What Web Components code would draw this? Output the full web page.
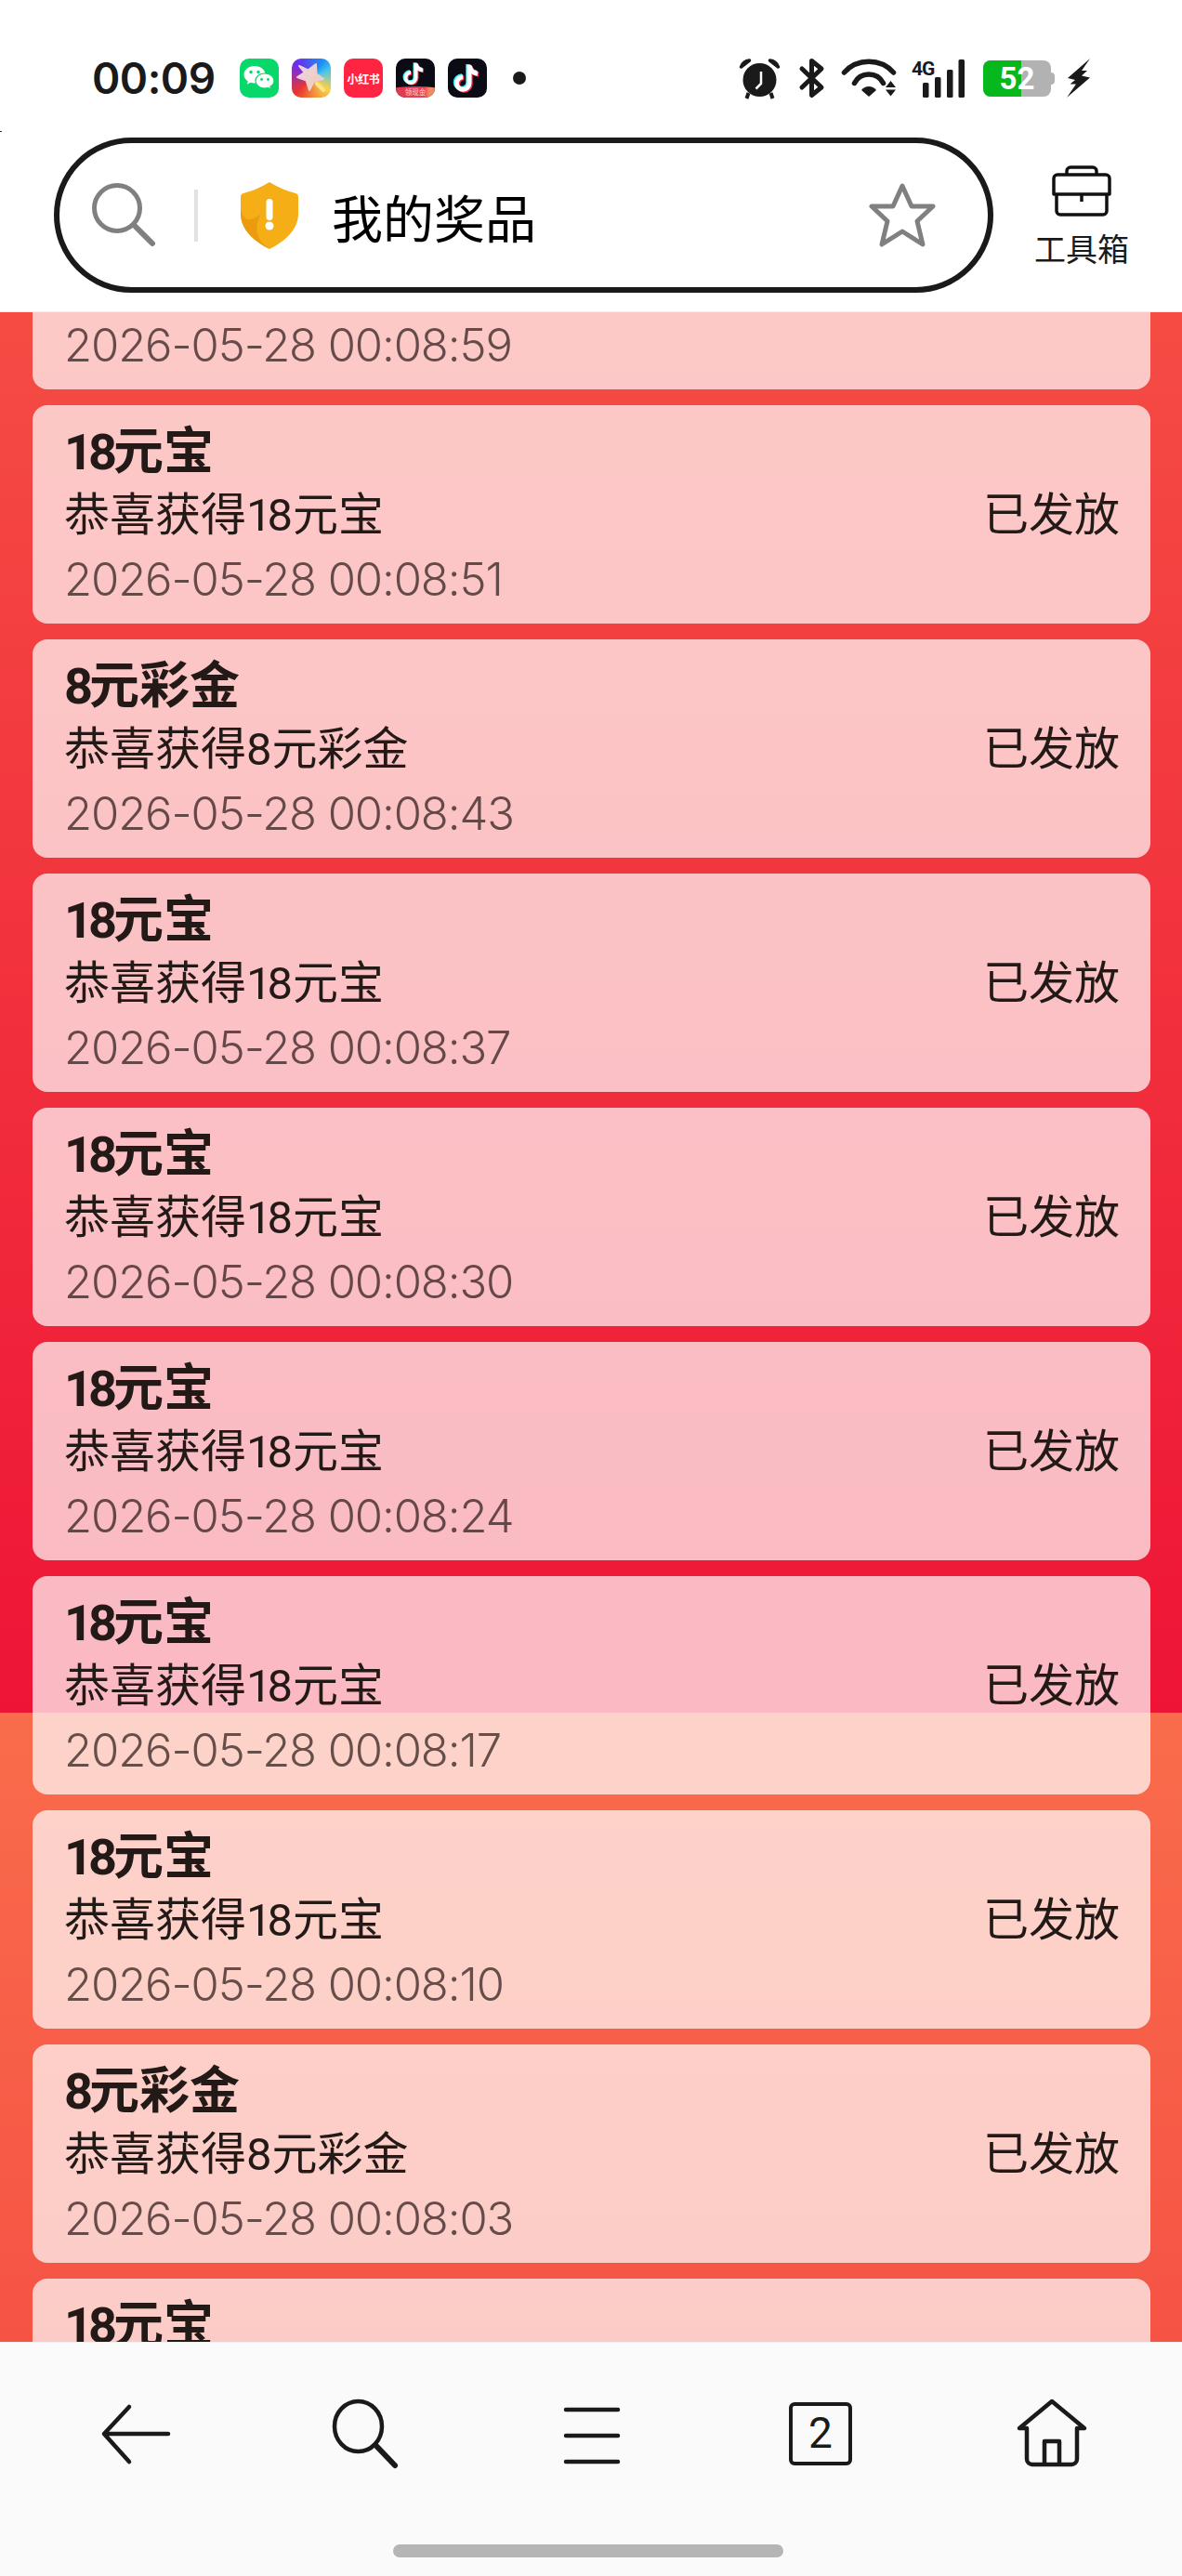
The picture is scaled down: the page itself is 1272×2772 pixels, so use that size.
<!DOCTYPE html>
<html lang="zh">
<head>
<meta charset="utf-8">
<title>我的奖品</title>
<style>
  html, body { margin: 0; padding: 0; }
  body { width: 1272px; height: 2772px; overflow: hidden; font-family: Roboto, "Noto Sans CJK SC", sans-serif; }
  .n { letter-spacing: -5px; margin-right: 1px; }
  .m { letter-spacing: -5px; margin-right: 5px; }
  prize-phone { height: 2772px; }
</style>
</head>
<body>
<prize-phone>
  <top-header slot="top" title-text="我的奖品"></top-header>

  <prize-card first><span slot="time">2026-05-28 00:08:59</span></prize-card>
  <prize-card><span slot="title"><span class="n">18</span>元宝</span><span slot="desc">恭喜获得<span class="m">18</span>元宝</span><span slot="state">已发放</span><span slot="time">2026-05-28 00:08:51</span></prize-card>
  <prize-card><span slot="title"><span class="n">8</span>元彩金</span><span slot="desc">恭喜获得8元彩金</span><span slot="state">已发放</span><span slot="time">2026-05-28 00:08:43</span></prize-card>
  <prize-card><span slot="title"><span class="n">18</span>元宝</span><span slot="desc">恭喜获得<span class="m">18</span>元宝</span><span slot="state">已发放</span><span slot="time">2026-05-28 00:08:37</span></prize-card>
  <prize-card><span slot="title"><span class="n">18</span>元宝</span><span slot="desc">恭喜获得<span class="m">18</span>元宝</span><span slot="state">已发放</span><span slot="time">2026-05-28 00:08:30</span></prize-card>
  <prize-card><span slot="title"><span class="n">18</span>元宝</span><span slot="desc">恭喜获得<span class="m">18</span>元宝</span><span slot="state">已发放</span><span slot="time">2026-05-28 00:08:24</span></prize-card>
  <prize-card><span slot="title"><span class="n">18</span>元宝</span><span slot="desc">恭喜获得<span class="m">18</span>元宝</span><span slot="state">已发放</span><span slot="time">2026-05-28 00:08:17</span></prize-card>
  <prize-card><span slot="title"><span class="n">18</span>元宝</span><span slot="desc">恭喜获得<span class="m">18</span>元宝</span><span slot="state">已发放</span><span slot="time">2026-05-28 00:08:10</span></prize-card>
  <prize-card><span slot="title"><span class="n">8</span>元彩金</span><span slot="desc">恭喜获得8元彩金</span><span slot="state">已发放</span><span slot="time">2026-05-28 00:08:03</span></prize-card>
  <prize-card><span slot="title"><span class="n">18</span>元宝</span></prize-card>

  <bottom-nav slot="bottom"></bottom-nav>
</prize-phone>

<script>
const phoneTemplate = document.createElement("template");
phoneTemplate.innerHTML = `
  <style>
    :host { display: flex; flex-direction: column; width: 1272px; overflow: hidden; }
    .list {
      flex: 1;
      min-height: 0;
      overflow: hidden;
      display: flex;
      flex-direction: column;
      gap: 17px;
      padding: 0 34px 0 35px;
      background: linear-gradient(180deg, #f96c4b 0%, #ee1436 100%) 0 -869px / 100% 2376px repeat-y;
    }
    ::slotted(prize-card[first]) { margin-top: -152px; }
  </style>
  <slot name="top"></slot>
  <div class="list"><slot></slot></div>
  <slot name="bottom"></slot>
`;

class PrizePhone extends HTMLElement {
  constructor(){
    super();
    this.attachShadow({mode:"open"});
    this.shadowRoot.appendChild(phoneTemplate.content.cloneNode(true));
  }
}

const headerTemplate = document.createElement("template");
headerTemplate.innerHTML = `
  <style>
    :host { display: block; flex: none; height: 336px; box-sizing: border-box; background: #fff; border-bottom: 1px solid #eee; position: relative; z-index: 1; font-family: Roboto, "Noto Sans CJK SC", sans-serif; color: #1a1a1a; }
    .speck { position: absolute; left: 0; top: 141px; width: 2px; height: 1px; background: #333; }
    .status { display: flex; align-items: center; justify-content: space-between; height: 44px; padding: 62px 99px 0; }
    .left, .right { display: flex; align-items: center; }
    .clock { font: 600 46px Inter, Roboto, sans-serif; width: 131px; margin-right: 28px; letter-spacing: -0.5px; white-space: nowrap; }
    .app { width: 42px; height: 42px; margin-right: 14px; border-radius: 10px; overflow: hidden; position: relative; display: block; flex: none; }
    .app svg { display: block; }
    .wechat { background: #07d869; }
    .star { background: conic-gradient(from 315deg, #6a2cf0 0deg, #1c8ff5 80deg, #49c6e8 110deg, #f7d24a 170deg, #f3873a 220deg, #e8352f 270deg, #6a2cf0 360deg); }
    .xhs { background: #ff2442; color: #fff; font: 700 12px "Noto Sans CJK SC", sans-serif; display: flex; align-items: center; justify-content: center; white-space: nowrap; letter-spacing: -0.3px; }
    .tt { background: #0b0b16; }
    .strip { position: absolute; left: -2px; right: -2px; bottom: -2px; height: 14px; padding-bottom: 2px; box-sizing: border-box; border-radius: 60% 60% 0 0 / 3px 3px 0 0; background: linear-gradient(90deg, #de3850 0%, #e8405a 70%, #f08a60 82%); color: #ffd9c9; font: 400 7.5px/12px "Noto Sans CJK SC", sans-serif; text-align: center; }
    .dot { width: 14px; height: 14px; border-radius: 50%; background: #1a1a1a; margin-left: 14px; }
    .battery { position: relative; width: 77px; height: 39px; margin: 0 13px 0 20px; }
    .cell { position: absolute; left: 0; top: 0; width: 73px; height: 39px; border-radius: 8px; overflow: hidden; display: flex; background: #b2b2b2; }
    .cell i { display: block; width: 41px; background: #07b81c; }
    .nub { position: absolute; right: 0; top: 13px; width: 4px; height: 13px; border-radius: 0 4px 4px 0; background: #b2b2b2; }
    .level { position: absolute; left: 0; top: 0; width: 73px; text-align: center; font: 700 33px/39px Roboto, sans-serif; color: #fff; }
    .bar { display: flex; padding-left: 58px; margin-top: 42px; }
    .pill { display: flex; align-items: center; box-sizing: border-box; width: 1011px; height: 167px; border: 6px solid #1a1a1a; border-radius: 84px; background: #fff; padding: 0 56px 0 35px; }
    .sep { width: 4px; height: 56px; background: #e2e2e2; margin: 0 46px 0 40px; flex: none; }
    .title { flex: 1; margin-left: 36px; font: 400 55px "Noto Sans CJK SC", sans-serif; color: #000; white-space: nowrap; }
    .tool { width: 100px; margin-left: 45px; padding-top: 30px; display: flex; flex-direction: column; align-items: center; }
    .tool span { font: 400 34px/40px "Noto Sans CJK SC", sans-serif; margin-top: 14px; white-space: nowrap; }
    svg { display: block; flex: none; overflow: visible; }
  </style>
  <div class="speck"></div>
  <div class="status">
    <div class="left">
      <span class="clock">00:09</span>
      <span class="app wechat">
        <svg width="42" height="42" viewBox="0 0 42 42">
          <path d="M16 8c-6.400 0-11.500 4-11.500 9.200 0 3 1.700 5.500 4.300 7.200l-1 3.400 3.900-2c1.300.4 2.800.6 4.300.6 6.400 0 11.500-4 11.500-9.200S22.400 8 16 8z" fill="#fff"/>
          <path d="M27 16c-5.600 0-10 3.500-10 8s4.400 8 10 8c1.200 0 2.400-.2 3.500-.5l3.200 1.700-.8-2.900c2.500-1.500 4.100-3.800 4.100-6.300 0-4.500-4.400-8-10-8z" fill="#fff" stroke="#07d869" stroke-width="1.200"/>
          <circle cx="12" cy="14.500" r="1.700" fill="#07d869"/><circle cx="20" cy="14.500" r="1.700" fill="#07d869"/>
          <circle cx="23.500" cy="22.500" r="1.400" fill="#07d869"/><circle cx="30.500" cy="22.500" r="1.400" fill="#07d869"/>
        </svg>
      </span>
      <span class="app star">
        <svg width="42" height="42" viewBox="0 0 42 42">
          <defs><linearGradient id="st" x1="0" y1="0" x2="1" y2="1"><stop offset="0" stop-color="#e6d6f4"/><stop offset="1" stop-color="#f6c9a0"/></linearGradient></defs>
          <path d="M8 8l9.500 4.500L26 6l.5 10.500L34 22l-10 2-5 10-3.500-10.500L6 20l7.500-5z" fill="url(#st)" stroke="#eccfd6" stroke-width="2" stroke-linejoin="round"/>
          <path d="M27 27l7 7" stroke="#fbe58c" stroke-width="4" stroke-linecap="round"/>
        </svg>
      </span>
      <span class="app xhs">小红书</span>
      <span class="app tt">
        <svg width="42" height="34" viewBox="0 0 42 34">
          <g fill="none" stroke-width="4">
            <path d="M21.500 5v15.500a5.500 5.500 0 1 1-5.500-5.500M21.500 5.500c.8 4 3.600 6.500 7.500 7" stroke="#25f4ee" transform="translate(-1 -.8)"/>
            <path d="M21.500 5v15.500a5.500 5.500 0 1 1-5.500-5.500M21.500 5.500c.8 4 3.600 6.500 7.500 7" stroke="#fe2c55" transform="translate(1 .8)"/>
            <path d="M21.500 5v15.500a5.500 5.500 0 1 1-5.500-5.500M21.500 5.500c.8 4 3.600 6.500 7.500 7" stroke="#fff"/>
          </g>
        </svg>
        <span class="strip">领现金</span>
      </span>
      <span class="app tt">
        <svg width="42" height="42" viewBox="0 0 42 42">
          <g fill="none" stroke-width="5">
            <path d="M23 7v19.500a6.800 6.800 0 1 1-6.800-6.800M23 7.500c1 5 4.500 8 9 8.800" stroke="#25f4ee" transform="translate(-1.200 -1)"/>
            <path d="M23 7v19.500a6.800 6.800 0 1 1-6.800-6.800M23 7.500c1 5 4.500 8 9 8.800" stroke="#fe2c55" transform="translate(1.200 1)"/>
            <path d="M23 7v19.500a6.800 6.800 0 1 1-6.800-6.800M23 7.500c1 5 4.500 8 9 8.800" stroke="#fff"/>
          </g>
        </svg>
      </span>
      <span class="dot"></span>
    </div>
    <div class="right">
      <svg width="43" height="43" viewBox="0 0 43 43">
        <circle cx="21.500" cy="23" r="18" fill="#1a1a1a"/>
        <path d="M1.500 9C3 5 6 2.500 10.500 2zM41.500 9C40 5 37 2.500 32.500 2z" fill="#1a1a1a" stroke="#1a1a1a" stroke-width="3.500" stroke-linejoin="round"/>
        <path d="M9.500 37l-2 6M33.500 37l2 6" stroke="#1a1a1a" stroke-width="4"/>
        <path d="M23 14v13l-5.500 5.500" fill="none" stroke="#fff" stroke-width="2.500"/>
      </svg>
      <svg style="margin-left:21px" width="27" height="42" viewBox="0 0 27 42">
        <path d="M3 11l21 20-10.500 8.500v-37L24 11 3 31" fill="none" stroke="#1a1a1a" stroke-width="5" stroke-linejoin="round" stroke-linecap="round"/>
      </svg>
      <svg style="margin-left:19px" width="59" height="40" viewBox="0 0 59 40">
        <path d="M2.500 14A36 36 0 0 1 55.500 14M13.500 25.500A17.500 17.500 0 0 1 44.500 25.500" fill="none" stroke="#1a1a1a" stroke-width="5.500" stroke-linecap="round"/>
        <path d="M29 29c3 0 6 1.500 8 4l-8 7-8-7c2-2.500 5-4 8-4z" fill="#1a1a1a"/>
        <path d="M52.500 23l5.500 7H47zM52.500 39.500l5.500-7H47z" fill="#1a1a1a"/>
      </svg>
      <svg style="margin-left:17px" width="56" height="41" viewBox="0 0 56 41">
        <text x="-1" y="17" font-family="Roboto, sans-serif" font-weight="700" font-size="21" letter-spacing="-1" fill="#1a1a1a">4G</text>
        <rect x="11" y="25" width="6.500" height="16" rx="1.500" fill="#1a1a1a"/>
        <rect x="24" y="19" width="6.500" height="22" rx="1.500" fill="#1a1a1a"/>
        <rect x="37" y="11" width="6.500" height="30" rx="1.500" fill="#1a1a1a"/>
        <rect x="49.500" y="0" width="6.500" height="41" rx="1.500" fill="#1a1a1a"/>
      </svg>
      <div class="battery">
        <div class="cell"><i></i></div>
        <div class="nub"></div>
        <div class="level">52</div>
      </div>
      <svg width="25" height="42" viewBox="0 0 25 42">
        <path d="M25 0L1 21l8 2-5.500 4.500H10L0 42l25-21.500-9-2 6-5.500h-6z" fill="#1a1a1a"/>
      </svg>
    </div>
  </div>
  <div class="bar">
    <div class="pill">
      <svg width="70" height="70" viewBox="0 0 70 70">
        <circle cx="27" cy="27" r="24.500" fill="none" stroke="#808080" stroke-width="5"/>
        <path d="M45 45l20 20" stroke="#808080" stroke-width="6" stroke-linecap="round"/>
      </svg>
      <div class="sep"></div>
      <svg width="62" height="72" viewBox="0 0 62 72">
        <path d="M31 0c8 5 20 10 28 12 2 .6 3 2 3 4v18c0 16-13 29-31 38C13 63 0 50 0 34V16c0-2 1-3.400 3-4 8-2 20-7 28-12z" fill="#f5ae16"/>
        <path d="M31 72C13 63 0 50 0 34v-6c3 16 12 14 22 6-8 14-6 28 9 38z" fill="#ea9c0e"/>
        <rect x="27.500" y="18" width="7" height="23" rx="3.500" fill="#fff"/>
        <circle cx="31" cy="47" r="4.500" fill="#fff"/>
      </svg>
      <div class="title"></div>
      <svg width="72" height="69" viewBox="0 0 72 69">
        <path d="M36 3l10 22h23L52 41l6 25-22-14-22 14 6-25L3 25h23z" fill="none" stroke="#808080" stroke-width="5" stroke-linejoin="round"/>
      </svg>
    </div>
    <div class="tool">
      <svg width="64" height="55" viewBox="0 0 64 55">
        <g fill="none" stroke="#111" stroke-width="3.500" stroke-linejoin="round">
          <path d="M2 14a4 4 0 0 1 4-4h52a4 4 0 0 1 4 4v17H2z"/>
          <path d="M5 31v18a4 4 0 0 0 4 4h46a4 4 0 0 0 4-4V31"/>
          <path d="M16 10V6a4 4 0 0 1 4-4h24a4 4 0 0 1 4 4v4"/>
          <path d="M32 31v8"/>
        </g>
      </svg>
      <span>工具箱</span>
    </div>
  </div>
`;

class TopHeader extends HTMLElement {
  constructor(){
    super();
    this.attachShadow({mode:"open"});
    this.shadowRoot.appendChild(headerTemplate.content.cloneNode(true));
  }

  connectedCallback(){
    this.shadowRoot.querySelector(".title").textContent = this.getAttribute("title-text");
  }
}

const cardTemplate = document.createElement("template");
cardTemplate.innerHTML = `
  <style>
    :host { display: grid; flex: none; box-sizing: border-box; height: 235px; padding: 14px 33px 12px 34px; grid-template-columns: 1fr auto; grid-template-rows: 69.5px 69.5px 69.5px; border-radius: 16px; background: rgba(255,255,255,.7); color: #231a18; font-family: Roboto, "Noto Sans CJK SC", sans-serif; white-space: nowrap; }
    .title { grid-column: 1 / 3; font-weight: 700; font-size: 54px; line-height: 74px; height: 69.5px; }
    .desc { font-size: 49px; line-height: 69.5px; }
    .state { font-size: 49px; line-height: 69.5px; }
    .time { grid-column: 1 / 3; font-family: Inter, Roboto, sans-serif; font-weight: 340; font-size: 49px; letter-spacing: -1.1px; line-height: 69.5px; color: rgba(30,15,15,.68); }
  </style>
  <div class="title"><slot name="title"></slot></div>
  <div class="desc"><slot name="desc"></slot></div>
  <div class="state"><slot name="state"></slot></div>
  <div class="time"><slot name="time"></slot></div>
`;

class PrizeCard extends HTMLElement {
  constructor(){
    super();
    this.attachShadow({mode:"open"});
    this.shadowRoot.appendChild(cardTemplate.content.cloneNode(true));
  }
}

const navTemplate = document.createElement("template");
navTemplate.innerHTML = `
  <style>
    :host { display: block; flex: none; box-sizing: border-box; height: 252px; background: #fafafa; border-top: 1px solid #eee; position: relative; z-index: 1; color: #1a1a1a; }
    .row { display: flex; padding: 61px 0 0 109px; }
    svg { display: block; flex: none; overflow: visible; }
    .tab { position: relative; box-sizing: border-box; width: 68px; height: 68px; margin: 3px 0 0 182px; border: 4.500px solid #1a1a1a; border-radius: 6px; font: 400 46px/59px Roboto, sans-serif; text-align: center; }
    .handle { position: absolute; left: 423px; top: 217px; width: 420px; height: 14px; border-radius: 7px; background: #b5b5b5; }
  </style>
  <div class="row">
    <svg width="74" height="72" viewBox="0 0 74 72">
      <path d="M72 37H3M30 8L3 37l27 30" fill="none" stroke="#1a1a1a" stroke-width="4.500" stroke-linecap="round" stroke-linejoin="round"/>
    </svg>
    <svg style="margin-left:175px" width="70" height="72" viewBox="0 0 70 72">
      <ellipse cx="27.500" cy="29" rx="25.500" ry="27" fill="none" stroke="#1a1a1a" stroke-width="4.500"/>
      <path d="M46 49l21 22" fill="none" stroke="#1a1a1a" stroke-width="6" stroke-linecap="round"/>
    </svg>
    <svg style="margin-left:179px" width="60" height="72" viewBox="0 0 60 72">
      <path d="M2 11h56M2 39h56M2 67h56" fill="none" stroke="#1a1a1a" stroke-width="4.500" stroke-linecap="round"/>
    </svg>
    <div class="tab">2</div>
    <svg style="margin-left:178px" width="74" height="72" viewBox="0 0 74 72">
      <path d="M2 31L37 2l35 29H64v33a6 6 0 0 1-6 6H16a6 6 0 0 1-6-6V31z" fill="none" stroke="#1a1a1a" stroke-width="4.500" stroke-linejoin="round"/>
      <path d="M29 70V45h16v25" fill="none" stroke="#1a1a1a" stroke-width="4.500" stroke-linejoin="round"/>
    </svg>
  </div>
  <div class="handle"></div>
`;

class BottomNav extends HTMLElement {
  constructor(){
    super();
    this.attachShadow({mode:"open"});
    this.shadowRoot.appendChild(navTemplate.content.cloneNode(true));
  }
}

window.customElements.define("prize-phone", PrizePhone);
window.customElements.define("top-header", TopHeader);
window.customElements.define("prize-card", PrizeCard);
window.customElements.define("bottom-nav", BottomNav);
</script>
</body>
</html>
